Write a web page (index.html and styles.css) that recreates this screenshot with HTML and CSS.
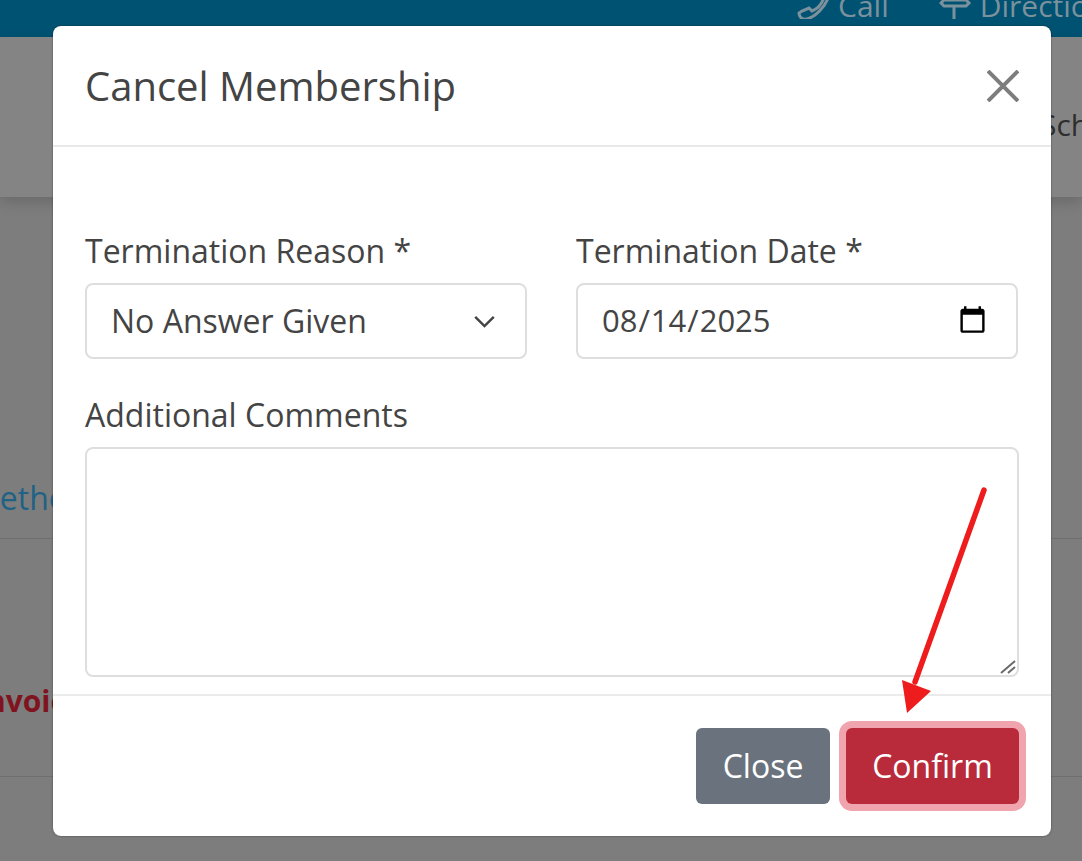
FILE: index.html
```html
<!DOCTYPE html>
<html lang="en">
<head>
    <meta charset="UTF-8">
    <meta name="viewport" content="width=device-width, initial-scale=1.0">
    <title>Cancel Membership</title>
    <link rel="stylesheet" href="styles.css">
</head>
<body>
    <div class="page">
        <div class="topbar">
            <span class="top-link">
                <svg class="top-icon" viewBox="0 0 33 30"><path d="M2 24c0 5 4 7 8 6 8-2 18-12 21-21 1-3 0-6-3-8l-5 7 3 3c-2 5-6 9-11 11l-3-3-7 3z"/></svg>
                Call
            </span>
            <span class="top-link">
                <svg class="top-icon" viewBox="0 0 33 30"><path d="M15 0v11M5 11h22l3 3-3 3H5l-3-3zM15 17v13"/></svg>
                Directions
            </span>
        </div>
        <div class="subhead"><span class="sub-text">Schedule</span></div>
        <div class="row row-link"><a class="method">Method</a></div>
        <div class="row row-invoice"><b class="invoice">Invoice</b></div>
    </div>

    <div class="modal">
        <div class="modal-header">
            <h2>Cancel Membership</h2>
            <svg class="close-x" viewBox="0 0 32 32"><path d="M1 1l30 30M31 1L1 31"/></svg>
        </div>
        <div class="modal-body">
            <div class="field-row">
                <div class="field">
                    <label for="reason">Termination Reason *</label>
                    <select id="reason">
                        <option>No Answer Given</option>
                    </select>
                </div>
                <div class="field">
                    <label for="termDate">Termination Date *</label>
                    <input type="date" id="termDate" value="2025-08-14">
                </div>
            </div>
            <div class="field">
                <label for="comments">Additional Comments</label>
                <div class="textarea-wrap">
                    <textarea id="comments"></textarea>
                    <svg class="grip" viewBox="0 0 18 16"><path d="M2 14L16 2M9 14l7-6"/></svg>
                </div>
            </div>
        </div>
        <div class="modal-footer">
            <button class="btn btn-close">Close</button>
            <button class="btn btn-confirm">Confirm</button>
        </div>
    </div>

    <svg class="arrow" viewBox="0 0 1082 861">
        <path class="arrow-line" d="M984 490L915 682"/>
        <path class="arrow-head" d="M902 680L931 691L907 713z"/>
    </svg>
</body>
</html>
```

FILE: styles.css
```css
* {
    box-sizing: border-box;
}
html, body {
    margin: 0;
    height: 100%;
}
body {
    font-family: "Open Sans", sans-serif;
    color: #444;
    background-color: #7d7d7d;
    overflow: hidden;
    position: relative;
}
.page {
    height: 861px;
}
.topbar {
    height: 37px;
    background-color: #005273;
    display: flex;
    gap: 50px;
    padding-left: 797px;
    overflow: hidden;
    white-space: nowrap;
}
.top-link {
    color: #7b919c;
    font-size: 30px;
    line-height: 30px;
    margin-top: -9px;
    display: flex;
    gap: 8px;
}
.top-icon {
    width: 33px;
    height: 30px;
    margin-top: -2px;
    fill: none;
    stroke: #7b919c;
    stroke-width: 3;
}
.subhead {
    position: relative;
    height: 160px;
    background-color: #848484;
    box-shadow: 0 5px 14px rgba(0,0,0,0.16);
    padding: 68px 0 0 1040px;
    overflow: hidden;
    white-space: nowrap;
}
.sub-text {
    font-size: 30px;
    line-height: 40px;
    color: #2e2e2e;
}
.row {
    border-bottom: 1px solid #6f6f6f;
    overflow: hidden;
    white-space: nowrap;
}
.row-link {
    height: 342px;
    padding-top: 281px;
}
.row-invoice {
    height: 238px;
    padding-top: 142px;
}
.method {
    display: block;
    margin-left: -29px;
    font-size: 32px;
    line-height: 40px;
    color: #1f6285;
}
.invoice {
    display: block;
    margin-left: -24px;
    font-size: 30px;
    line-height: 40px;
    color: #7f1420;
}
.modal {
    position: absolute;
    left: 53px;
    top: 26px;
    width: 998px;
    height: 810px;
    background-color: #fff;
    border-radius: 8px;
    box-shadow: 0 0 2px rgba(0,0,0,0.5);
    display: flex;
    flex-direction: column;
}
.modal-header {
    height: 121px;
    padding: 0 32px;
    border-bottom: 2px solid #e9e9e9;
    display: flex;
    align-items: center;
    justify-content: space-between;
}
.modal-header h2 {
    margin: 0;
    font-size: 40px;
    font-weight: 400;
    line-height: 48px;
    color: #444;
}
.close-x {
    width: 32px;
    height: 32px;
    fill: none;
    stroke: #7d7d7d;
    stroke-width: 4;
}
.modal-body {
    flex: 1;
    padding: 84px 32px 0;
    display: flex;
    flex-direction: column;
    gap: 36px;
}
.field-row {
    display: grid;
    grid-template-columns: 442px 442px;
    gap: 49px;
}
.field label {
    display: block;
    font-size: 32px;
    line-height: 40px;
    margin-bottom: 12px;
    color: #444;
}
.field select,
.field input,
.field textarea {
    display: block;
    width: 100%;
    font-family: "Open Sans", sans-serif;
    color: #444;
    background-color: #fff;
    border: 2px solid #dedede;
    border-radius: 8px;
    outline: none;
}
.field select,
.field input {
    height: 76px;
    padding: 0 24px;
}
.field select {
    font-size: 32px;
    padding-bottom: 2px;
    appearance: none;
    background-image: url("data:image/svg+xml,%3Csvg xmlns='http://www.w3.org/2000/svg' viewBox='0 0 24 14'%3E%3Cpath d='M2 2l10 10L22 2' fill='none' stroke='%23444' stroke-width='2.6'/%3E%3C/svg%3E");
    background-repeat: no-repeat;
    background-position: right 29px center;
    background-size: 23px 13px;
}
.field input {
    font-size: 31px;
    padding-left: 23px;
    padding-bottom: 2px;
}
.field input::-webkit-calendar-picker-indicator {
    margin-right: 2px;
}
.textarea-wrap {
    position: relative;
}
.field textarea {
    height: 230px;
    resize: none;
}
.grip {
    position: absolute;
    right: 2px;
    bottom: 2px;
    width: 18px;
    height: 16px;
    fill: none;
    stroke: #6a6a6a;
    stroke-width: 2;
}
.modal-footer {
    height: 142px;
    border-top: 2px solid #ebebeb;
    padding: 32px 32px 0 0;
    display: flex;
    justify-content: flex-end;
    gap: 16px;
}
.btn {
    height: 76px;
    padding: 0 0 2px;
    font-family: "Open Sans", sans-serif;
    font-size: 32px;
    color: #fff;
    border: none;
    border-radius: 6px;
}
.btn-close {
    width: 134px;
    background-color: #6a737d;
}
.btn-confirm {
    width: 173px;
    background-color: #b92a3b;
    box-shadow: 0 0 0 7px #f0a5ae;
}
.arrow {
    position: absolute;
    left: 0;
    top: 0;
    width: 1082px;
    height: 861px;
    pointer-events: none;
}
.arrow-line {
    stroke: #ee1c1c;
    stroke-width: 5.5;
    stroke-linecap: round;
    fill: none;
}
.arrow-head {
    fill: #ee1c1c;
}
```
